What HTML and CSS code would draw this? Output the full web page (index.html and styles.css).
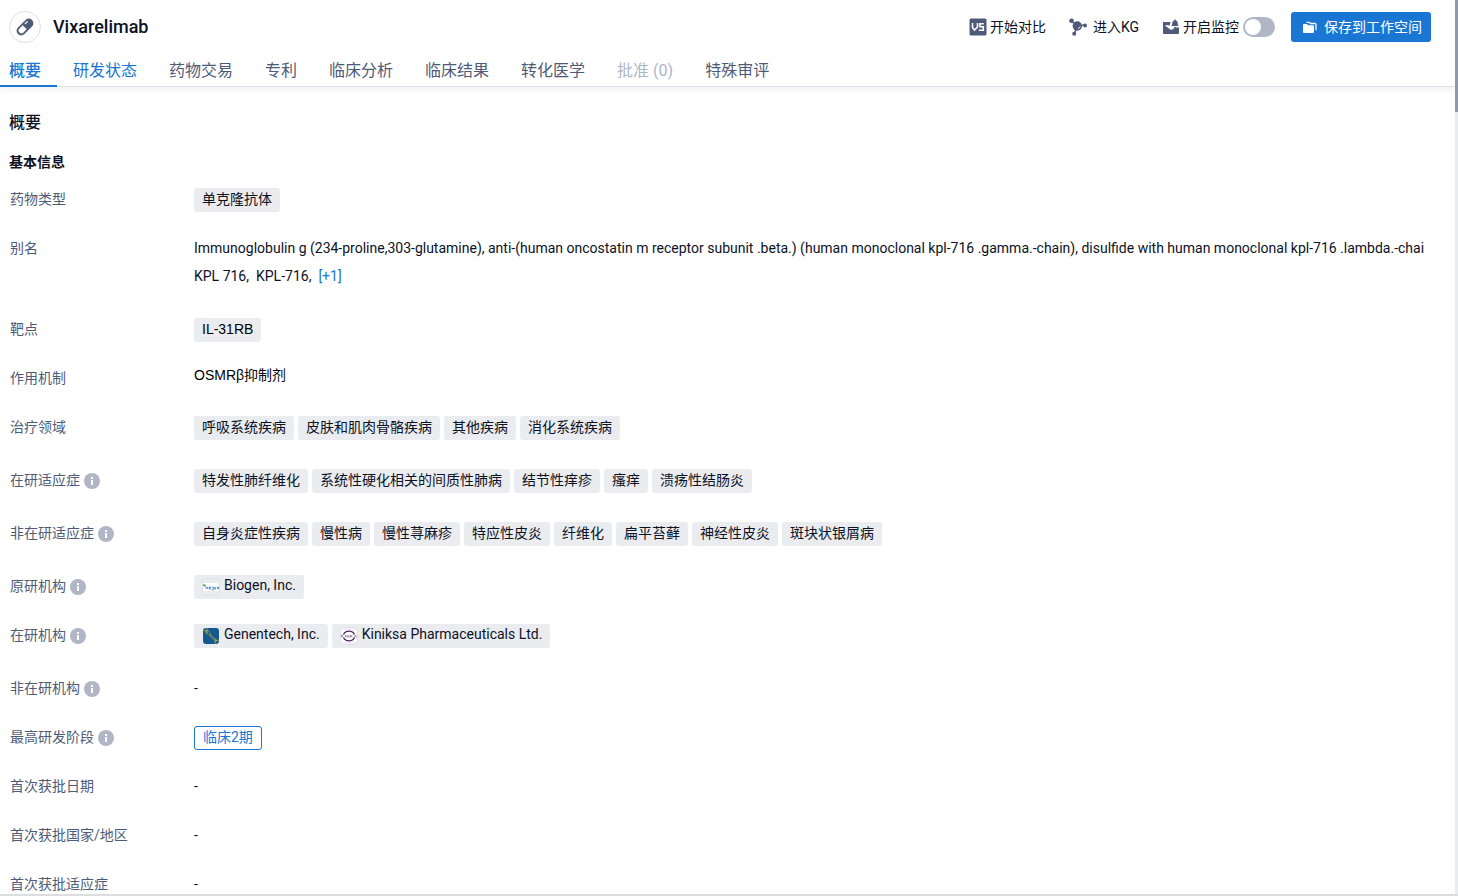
FILE: index.html
```
<!DOCTYPE html>
<html lang="zh-CN">
<head>
<meta charset="utf-8">
<meta name="viewport" content="width=device-width, initial-scale=1">
<title>Vixarelimab</title>
<link rel="stylesheet" href="styles.css">
</head>
<body>
<svg width="0" height="0" class="defs" aria-hidden="true">
  <symbol id="info" viewBox="0 0 16 16">
    <circle cx="8" cy="8" r="8" fill="#b0b6c5"/>
    <path d="M7 4h2v2H7zM7 7h2v5H7z" fill="#fff"/>
  </symbol>
</svg>
<div class="page">
  <header class="header">
    <div class="title-bar">
      <span class="avatar">
        <svg width="18" height="18" viewBox="0 0 18 18" aria-hidden="true">
          <g transform="rotate(-45 9 9)">
            <rect x="-1" y="4.400" width="20" height="9.200" rx="4.600" fill="#4e5b78"/>
            <path d="M8.600 6.200H4a2.800 2.800 0 0 0 0 5.600h4.600z" fill="#fff"/>
            <path d="M11.500 6.800h3" stroke="#fff" stroke-width="1.200" stroke-linecap="round"/>
          </g>
        </svg>
      </span>
      <h1 class="drug-name">Vixarelimab</h1>
      <div class="actions">
        <button class="action compare" type="button">
          <svg width="18" height="18" viewBox="0 0 18 18" aria-hidden="true">
            <rect x="0.500" y="0.500" width="17" height="17" rx="1.500" fill="#4e5b78"/>
            <path d="M3.500 5v4.500l2 2.500 3-3V5M14.800 5.800H11v3h3.300v3.400H9.800" fill="none" stroke="#fff" stroke-width="1.600"/>
          </svg>
          <span>开始对比</span>
        </button>
        <button class="action graph" type="button">
          <svg width="18" height="18" viewBox="0 0 18 18" aria-hidden="true">
            <g fill="#4e5b78" stroke="#4e5b78">
              <path d="M2.500 3L8 8l8-1M8 8l-2.500 7.500" fill="none" stroke-width="1.600"/>
              <circle cx="2.500" cy="2.800" r="2.300" stroke="none"/>
              <circle cx="8.300" cy="8" r="4.700" stroke="none"/>
              <circle cx="16" cy="7.500" r="2" stroke="none"/>
              <circle cx="5.200" cy="15.800" r="2" stroke="none"/>
            </g>
            <path d="M9 10.600A3.200 3.200 0 0 0 11.200 8.600" fill="none" stroke="#fff" stroke-width="0.900"/>
          </svg>
          <span>进入KG</span>
        </button>
        <div class="monitor">
          <svg width="18" height="18" viewBox="0 0 18 18" aria-hidden="true">
            <path d="M1 4h7.500l-.8 3.500L6 7.200 3.500 7v1L9 12l5-2.500h3V15a1 1 0 0 1-1 1H2a1 1 0 0 1-1-1z" fill="#4e5b78"/>
            <path d="M9 8c1-.5 1.200-1.500 1.300-3 .1-1.500 1-2.300 2-2.500V1.500h1.400v1c1.200.3 2 1.200 2 2.500.1 1.500.3 2.500 1.300 3z" fill="#4e5b78"/>
            <path d="M11.800 9h2.400a1.200 1.200 0 0 1-2.400 0z" fill="#4e5b78"/>
          </svg>
          <label for="monitor">开启监控</label>
          <input id="monitor" class="switch" type="checkbox" role="switch">
        </div>
        <button class="save" type="button">
          <svg width="16" height="16" viewBox="0 0 16 16" aria-hidden="true">
            <path d="M1 6a1 1 0 0 1 1-1h3l1 1.300h5a1 1 0 0 1 1 1V13a1 1 0 0 1-1 1H2a1 1 0 0 1-1-1z" fill="#fff"/>
            <path d="M4.500 3.300h3l1 1.200h4.500a1 1 0 0 1 1 1v5.800" fill="none" stroke="#fff" stroke-width="1.300" stroke-linejoin="round"/>
          </svg>
          <span>保存到工作空间</span>
        </button>
      </div>
    </div>
    <nav class="tabs">
      <a class="tab current" href="#overview" aria-current="page">概要</a>
      <a class="tab hover" href="#status">研发状态</a>
      <a class="tab" href="#deals">药物交易</a>
      <a class="tab" href="#patents">专利</a>
      <a class="tab" href="#trials">临床分析</a>
      <a class="tab" href="#results">临床结果</a>
      <a class="tab" href="#translational">转化医学</a>
      <a class="tab disabled" aria-disabled="true">批准 (0)</a>
      <a class="tab" href="#review">特殊审评</a>
    </nav>
  </header>
  <main class="content" id="overview">
    <h2 class="section-title">概要</h2>
    <h3 class="group-title">基本信息</h3>
    <dl class="facts">
      <div class="fact"><dt>药物类型</dt><dd><span class="tag">单克隆抗体</span></dd></div>
      <div class="fact"><dt>别名</dt><dd class="aliases"><p>Immunoglobulin g (234-proline,303-glutamine), anti-(human oncostatin m receptor subunit .beta.) (human monoclonal kpl-716 .gamma.-chain), disulfide with human monoclonal kpl-716 .lambda.-chai</p><p><span>KPL 716,</span><span>KPL-716,</span><a href="#aliases">[+1]</a></p></dd></div>
      <div class="fact"><dt>靶点</dt><dd><span class="tag target">IL-31RB</span></dd></div>
      <div class="fact"><dt>作用机制</dt><dd class="mechanism">OSMRβ抑制剂</dd></div>
      <div class="fact loose"><dt>治疗领域</dt><dd><span class="tag">呼吸系统疾病</span><span class="tag">皮肤和肌肉骨骼疾病</span><span class="tag">其他疾病</span><span class="tag">消化系统疾病</span></dd></div>
      <div class="fact loose"><dt>在研适应症<svg class="info"><use href="#info"/></svg></dt><dd><span class="tag">特发性肺纤维化</span><span class="tag">系统性硬化相关的间质性肺病</span><span class="tag">结节性痒疹</span><span class="tag">瘙痒</span><span class="tag">溃疡性结肠炎</span></dd></div>
      <div class="fact loose"><dt>非在研适应症<svg class="info"><use href="#info"/></svg></dt><dd><span class="tag">自身炎症性疾病</span><span class="tag">慢性病</span><span class="tag">慢性荨麻疹</span><span class="tag">特应性皮炎</span><span class="tag">纤维化</span><span class="tag">扁平苔藓</span><span class="tag">神经性皮炎</span><span class="tag">斑块状银屑病</span></dd></div>
      <div class="fact"><dt>原研机构<svg class="info"><use href="#info"/></svg></dt><dd><span class="tag org">
        <svg class="logo" viewBox="0 0 18 18" aria-hidden="true">
          <rect x="0.500" y="0.500" width="17" height="17" rx="3" fill="#ebecf0" stroke="#dfe1e8"/>
          <rect x="1" y="5" width="16" height="8" fill="#fff"/>
          <circle cx="2.300" cy="7.200" r="1.200" fill="#6ea660"/>
          <path d="M4 8v3M5.500 9v2M7 9h1.500v2H7zM9.800 9h1.500v3H9.800M12.700 9.800h1.500M12.700 9v2h1.500M15.500 11V9h1v2" fill="none" stroke="#4791c4" stroke-width="0.900"/>
        </svg>Biogen, Inc.</span></dd></div>
      <div class="fact loose"><dt>在研机构<svg class="info"><use href="#info"/></svg></dt><dd><span class="tag org">
        <svg class="logo" viewBox="0 0 18 18" aria-hidden="true">
          <rect x="1" y="1" width="16" height="16" rx="3" fill="#15578f"/>
          <path d="M1.500 4C7 1 8 6 9 9s4 6 8 4M5.500 1C3 6 5 7 9 9s5 3 4 8M3 3.500l2 3.500M5.500 3L4.500 7M12 11l4 3M12.500 14.500l3-1" fill="none" stroke="#a0a64b" stroke-width="0.800"/>
        </svg>Genentech, Inc.</span><span class="tag org">
        <svg class="logo" viewBox="0 0 18 18" aria-hidden="true">
          <rect x="0.500" y="0.500" width="17" height="17" rx="3" fill="#f1f1f5" stroke="#dfe1e8"/>
          <rect x="1" y="3" width="16" height="12" fill="#fff"/>
          <path d="M3.500 7.500C5.500 3 12.500 3 14.500 7.500M3.500 10.500c2 4.500 9 4.500 11 0" fill="none" stroke="#4b2760" stroke-width="1.300"/>
          <path d="M1.500 7.500v3M3.500 8L2 9l1.500 1.500M5.500 8v2.500M7 10.500V8l2 2.500V8M10.500 8v2.500M12.500 8L11 9l1.500 1.500M15.500 8l-1 2.500M15.500 8l1 2.500" fill="none" stroke="#84678f" stroke-width="0.700"/>
        </svg>Kiniksa Pharmaceuticals Ltd.</span></dd></div>
      <div class="fact"><dt>非在研机构<svg class="info"><use href="#info"/></svg></dt><dd>-</dd></div>
      <div class="fact"><dt>最高研发阶段<svg class="info"><use href="#info"/></svg></dt><dd><span class="tag phase">临床2期</span></dd></div>
      <div class="fact"><dt>首次获批日期</dt><dd>-</dd></div>
      <div class="fact"><dt>首次获批国家/地区</dt><dd>-</dd></div>
      <div class="fact"><dt>首次获批适应症</dt><dd>-</dd></div>
    </dl>
  </main>
  <div class="scroll-track"><div class="scroll-thumb"></div></div>
</div>
</body>
</html>
```

FILE: styles.css
```
* { box-sizing: border-box; }

body {
  margin: 0;
  background: #fff;
  color: #0b1226;
  font: 14px/22px Roboto, "Noto Sans CJK SC", sans-serif;
}

h1, h2, h3, p, dl, dd { margin: 0; }
a { color: #1976d2; text-decoration: none; }
button { border: 0; padding: 0; background: none; color: inherit; font: inherit; cursor: pointer; }
svg { flex: none; }
.defs { position: absolute; }

.page {
  position: relative;
  display: flex;
  flex-direction: column;
  height: 100vh;
  overflow: hidden;
  border-bottom: 2px solid #dcdde0;
}

.header {
  flex: none;
  margin-right: 3px;
  border-bottom: 1px solid #dfe1e8;
  box-shadow: 0 2px 6px rgba(30, 40, 70, 0.08);
}

.title-bar {
  display: flex;
  align-items: center;
  height: 54px;
  padding: 0 24px 0 9px;
}

.avatar {
  display: flex;
  align-items: center;
  justify-content: center;
  width: 32px;
  height: 32px;
  border: 1px solid #dfe1e8;
  border-radius: 50%;
}

.drug-name { margin-left: 12px; font-size: 18px; line-height: 24px; font-weight: 500; }

.actions { display: flex; align-items: center; margin-left: auto; }
.action, .monitor { display: flex; align-items: center; gap: 3px; }
.action { margin-right: 23px; }
.graph { gap: 6px; }
.monitor { margin-right: 16px; }

.switch {
  appearance: none;
  display: flex;
  align-items: center;
  width: 32px;
  height: 20px;
  margin: 0 0 0 1px;
  padding: 2px;
  border-radius: 10px;
  background: #b0b6c5;
}
.switch::before { content: ""; width: 16px; height: 16px; border-radius: 50%; background: #fff; }
.switch:checked { justify-content: flex-end; background: #1976d2; }

.save {
  display: flex;
  align-items: center;
  gap: 6px;
  height: 30px;
  padding: 0 9px 0 11px;
  border-radius: 3px;
  background: #1976d2;
  color: #fff;
}

.tabs { display: flex; height: 32px; font-size: 16px; line-height: 34px; }
.tab { height: 33px; padding: 0 16px; color: #4e5b78; white-space: nowrap; }
.tab:first-child { padding-left: 9px; }
.tab.current { border-bottom: 2px solid #1976d2; color: #1976d2; font-weight: 500; }
.tab.hover { color: #1976d2; }
.tab.disabled { color: #b0b6c5; }

.content { flex: 1; min-height: 0; overflow: hidden; padding: 24px 34px 0 9px; }
.section-title { font-size: 16px; line-height: 24px; font-weight: 500; }
.group-title { margin-top: 16px; font-size: 14px; line-height: 22px; font-weight: 700; }

.facts { margin-top: 15px; }
.fact { display: flex; margin-bottom: 25px; }
.fact.loose { margin-bottom: 29px; }
.fact dt {
  display: flex;
  align-items: center;
  flex: none;
  gap: 4px;
  width: 185px;
  height: 24px;
  padding: 0 0 2px 1px;
  color: #4e5b78;
}
.fact dd { display: flex; flex: 1; flex-wrap: wrap; gap: 4px; min-width: 0; }
.fact .aliases { display: block; line-height: 28px; margin-top: -3px; padding-bottom: 3px; }
.aliases p { display: flex; gap: 7px; white-space: nowrap; overflow: hidden; }
.fact .mechanism { line-height: 16px; }
.target, .mechanism { font-family: "Liberation Sans", "Noto Sans CJK SC", sans-serif; color: #000; }

.info { width: 16px; height: 16px; margin-top: 2px; }

.tag {
  display: flex;
  align-items: center;
  height: 24px;
  padding: 0 8px 2px;
  border-radius: 3px;
  background: #ebecf0;
  white-space: nowrap;
}
.org { gap: 4px; padding-bottom: 4px; }
.logo { align-self: flex-start; width: 18px; height: 18px; margin-top: 3px; }
.phase { padding: 0 8px 2px; border: 1px solid #1976d2; background: #fff; color: #1976d2; }

.scroll-track { position: absolute; top: 0; right: 0; bottom: 0; width: 3px; background: #ebecf0; }
.scroll-thumb { height: 12.5%; background: #9299a8; }
```
